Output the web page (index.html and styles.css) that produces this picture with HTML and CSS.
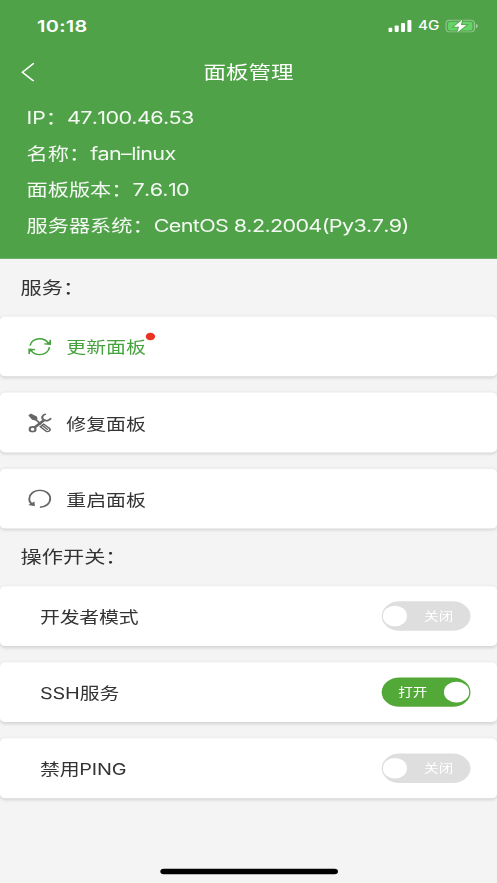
FILE: index.html
```html
<!DOCTYPE html>
<html lang="zh-CN">
<head>
    <meta charset="UTF-8">
    <title>面板管理</title>
    <link rel="stylesheet" href="styles.css">
</head>
<body>
    <div class="screen">
        <header class="header">
            <div class="status-bar">
                <span class="time">10:18</span>
                <div class="status-icons">
                    <svg class="signal" viewBox="0 0 18 12" fill="#fff">
                        <rect x="0" y="7.6" width="3" height="3.8" rx="0.8"/>
                        <rect x="4.8" y="5.4" width="3" height="6" rx="0.8"/>
                        <rect x="9.6" y="3.1" width="3" height="8.3" rx="0.8"/>
                        <rect x="14.4" y="0.4" width="3" height="11" rx="0.8"/>
                    </svg>
                    <span class="network">4G</span>
                    <svg class="battery" viewBox="0 0 25 12">
                        <rect x="0.5" y="0.5" width="21.5" height="11" rx="3" fill="none" stroke="#fff" stroke-opacity="0.4"/>
                        <rect x="2" y="2" width="18.5" height="8" rx="1.8" fill="#65d367"/>
                        <path d="M23.2 4v4c.8-.3 1.3-1.1 1.3-2s-.5-1.7-1.3-2z" fill="#fff" fill-opacity="0.5"/>
                        <path d="M12.8.2L6.4 6.7h4L9 11.8l7-6.7h-4.2z" fill="#fff" stroke="#50a249" stroke-width="1.4" paint-order="stroke"/>
                    </svg>
                </div>
            </div>
            <nav class="nav">
                <svg class="back" viewBox="0 0 10 18" fill="none" stroke="#fff" stroke-width="1.3">
                    <path d="M9.5 1.2L.9 9.500l8.600 8.200"/>
                </svg>
                <h1 class="title">面板管理</h1>
            </nav>
            <ul class="info">
                <li>IP：<span>47.100.46.53</span></li>
                <li>名称：<span>fan–linux</span></li>
                <li>面板版本：<span>7.6.10</span></li>
                <li>服务器系统：<span>CentOS 8.2.2004(Py3.7.9)</span></li>
            </ul>
        </header>

        <main>
            <h2 class="section-title">服务：</h2>
            <div class="cards">
                <div class="card service update">
                    <svg class="icon" viewBox="0 0 18 18" fill="none" stroke="currentColor" stroke-width="1.2">
                        <path d="M1.700 7.800C2.300 4 5.300 1.500 8.900 1.500c3 0 5.500 1.700 6.700 4.500M16.300 9.200c-.3 3.900-3.500 6.900-7.300 6.900-3 0-5.700-1.700-6.700-4.500"/>
                        <path d="M16.900 2.400v4.200l-4.500-.4M1 15.500v-4.300l4.500.4"/>
                        <path d="M16.700 3.800v2.700l-3-.3zM1.200 14v-2.700l3 .3z" fill="currentColor" stroke="none"/>
                    </svg>
                    <span class="label">更新面板<i class="dot"></i></span>
                </div>
                <div class="card service">
                    <svg class="icon" viewBox="0 0 18 18" fill="none" stroke="currentColor">
                        <path d="M.4 2L2.200.2l4.600 2.700.6 2.300-1.700 1.600-2.400-.7z" fill="currentColor" stroke="none"/>
                        <path d="M5.500 5.400l4.500 4.800" stroke-width="1.400"/>
                        <path d="M5 13.200L12 6.600" stroke-width="2.200"/>
                        <path d="M13.600.7c-2.800.8-3.500 3.500-1.800 5.200s4.600 1.100 5.700-1.500" stroke-width="1.600"/>
                        <circle cx="3.600" cy="14.800" r="2.200" stroke-width="1.600"/>
                        <path d="M9.400 12.400l2.500-2.400 4.500 4c1.200 1.700-1 3.700-2.600 2.500zM11.200 11.500l4 3.800" stroke-width="1.200"/>
                    </svg>
                    <span class="label">修复面板</span>
                </div>
                <div class="card service">
                    <svg class="icon" viewBox="0 0 18 18" fill="none" stroke="currentColor" stroke-width="1.4">
                        <path d="M3 13.600C1.600 12.200 1 10.400 1.100 8.600 1.300 4.200 4.700.8 9.100.8s7.800 3.300 7.800 7.700-3.300 7.800-7.800 7.900"/>
                        <path d="M.3 14.400l4.700-3.200.3 4.400z" fill="currentColor" stroke="none"/>
                    </svg>
                    <span class="label">重启面板</span>
                </div>
            </div>

            <h2 class="section-title">操作开关：</h2>
            <div class="cards">
                <div class="card option">
                    <span class="label">开发者模式</span>
                    <div class="switch"><span class="knob"></span><span class="state">关闭</span></div>
                </div>
                <div class="card option">
                    <span class="label">SSH服务</span>
                    <div class="switch on"><span class="state">打开</span><span class="knob"></span></div>
                </div>
                <div class="card option">
                    <span class="label">禁用PING</span>
                    <div class="switch"><span class="knob"></span><span class="state">关闭</span></div>
                </div>
            </div>
        </main>

        <div class="home-indicator"></div>
    </div>
</body>
</html>
```
FILE: styles.css
```css
* {
    box-sizing: border-box;
}

html,
body {
    height: 100%;
    margin: 0;
    overflow: hidden;
    background: #f4f4f4;
}

/* 375x812 layout stretched over the window */
.screen {
    display: flex;
    flex-direction: column;
    width: 375px;
    height: 812px;
    transform: scale(1.32533, 1.08744);
    transform-origin: 0 0;
    font-family: Inter, "Noto Sans CJK SC", sans-serif;
    font-weight: 400;
    font-kerning: none;
    color: #333;
    background: #f4f4f4;
}

.header {
    height: 238px;
    color: #fff;
    background: #50a249;
}

.status-bar {
    display: flex;
    justify-content: space-between;
    align-items: center;
    height: 44px;
    padding: 3px 14px 0 28px;
}

.time {
    font-size: 15px;
    font-weight: 600;
    letter-spacing: 0.2px;
}

.status-icons {
    display: flex;
    align-items: center;
}

.signal {
    width: 18px;
    height: 12px;
}

.network {
    margin: 1px 4.5px 0 4px;
    font-size: 11.5px;
    font-weight: 500;
    line-height: 12px;
}

.battery {
    width: 25px;
    height: 12px;
}

.nav {
    display: grid;
    grid-template-columns: 10px 1fr 10px;
    align-items: center;
    height: 44px;
    padding: 0 16px;
}

.back {
    width: 10px;
    height: 18px;
}

.title {
    margin: -2px 0 0;
    font-size: 17px;
    font-weight: 400;
    text-align: center;
}

.info {
    margin: 0;
    padding: 4px 20px 0;
    list-style: none;
    font-size: 16px;
    line-height: 33px;
    color: #f4f9f3;
}

.info span {
    font-size: 16.3px;
    letter-spacing: -0.5px;
}

.section-title {
    margin: 0;
    padding-left: 15.5px;
    font-size: 16px;
    font-weight: 400;
    line-height: 53px;
}

.cards {
    display: flex;
    flex-direction: column;
    gap: 15px;
}

.card {
    display: flex;
    align-items: center;
    height: 55px;
    border-radius: 4px;
    background: #fff;
    box-shadow: 0 1px 3px rgba(0, 0, 0, 0.14);
    font-size: 15px;
}

.service {
    padding-left: 21px;
}

.icon {
    width: 18px;
    height: 18px;
    margin-right: 11px;
    color: #666;
}

.label {
    position: relative;
    margin-top: -1px;
}

.update,
.update .icon {
    color: #45a33c;
}

.dot {
    position: absolute;
    top: -1.5px;
    right: -7px;
    width: 7px;
    height: 7px;
    border-radius: 50%;
    background: #e93323;
}

.option {
    justify-content: space-between;
    padding: 0 20.5px 0 30.2px;
}

.option .label {
    letter-spacing: -0.15px;
}

.switch {
    display: flex;
    justify-content: space-between;
    align-items: center;
    width: 67px;
    height: 27px;
    padding: 0 12.5px 0 1px;
    border-radius: 14px;
    background: #dedede;
    color: #fff;
    font-size: 11px;
}

.switch.on {
    padding: 0 1px 0 13px;
    background: #52a938;
}

.state {
    margin-top: -2px;
}

.knob {
    width: 18.5px;
    height: 18.5px;
    border-radius: 50%;
    background: #fff;
}

.home-indicator {
    width: 134px;
    height: 5px;
    margin: auto auto 8px;
    border-radius: 3px;
    background: #000;
}
```
